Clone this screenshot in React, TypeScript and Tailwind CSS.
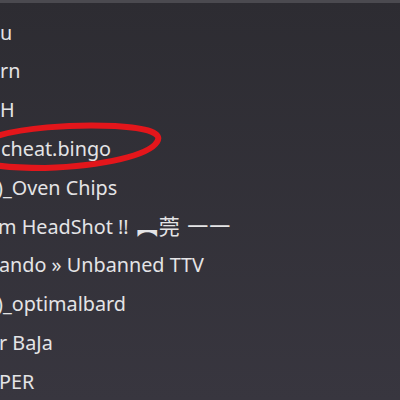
const rows: { text: string; tail?: string; offset: string }[] = [
  { text: 'u', offset: 'ml-0' },
  { text: 'rn', offset: 'ml-0' },
  { text: 'H', offset: 'ml-0' },
  { text: 'cheat.bingo', offset: 'ml-[1px]' },
  { text: ')_Oven Chips', offset: 'ml-[-3px]' },
  { text: 'm HeadShot !!', tail: '︻莞 一一', offset: 'ml-[-2px]' },
  { text: 'ando » Unbanned TTV', offset: 'ml-[-1px]' },
  { text: ')_optimalbard', offset: 'ml-[-3px]' },
  { text: 'r BaJa', offset: 'ml-[-1px]' },
  { text: 'PER', offset: 'ml-[-1px]' },
];

export default function App() {
  return (
    <div className="relative w-[400px] h-[400px] overflow-hidden bg-gradient-to-b from-[#2d2c32] to-[#38363f]">
      <div className="h-[3px] bg-[#4b4a50]" />
      <ul
        className="pt-[10px] text-[19.8px] text-[#e4e4e6]"
        style={{ fontFamily: '"Noto Sans", "Noto Sans CJK SC", sans-serif' }}
      >
        {rows.map((r) => (
          <li key={r.text} className={`h-[38.8px] flex items-center whitespace-pre ${r.offset}`}>
            {r.text}
            {r.tail && <span className="ml-[8px] text-[21px] tracking-[1px]">{r.tail}</span>}
          </li>
        ))}
      </ul>
      <svg className="absolute inset-0 pointer-events-none" width="400" height="400" viewBox="0 0 400 400">
        <path
          d="M -6 137 C 20 128, 70 124, 115 126 C 148 128, 163 133, 157 142 C 149 155, 105 166, 45 168 C 22 168, 6 167, -6 165"
          fill="none"
          stroke="#e3161b"
          strokeWidth="6"
          strokeLinecap="round"
        />
      </svg>
    </div>
  );
}
